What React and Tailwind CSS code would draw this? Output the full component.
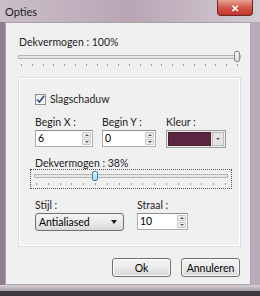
const font = "font-['Lato','Noto_Sans',sans-serif]";
const label = "text-[10.5px] leading-[15px] text-[#1e1e1e]";

const Ticks = ({ count, className }) => (
  <div className={`flex justify-between ${className}`}>
    {Array.from({ length: count }).map((_, i) => (
      <span key={i} className="block w-px h-[2px] bg-[#9a9a9a]" />
    ))}
  </div>
);

const Spinner = ({ value, width }) => (
  <div className={`${width} h-[17px] flex bg-white border border-[#abadb3] border-t-[#8e8f8f]`}>
    <div className="flex-1 pl-[2px] text-[10.5px] leading-[15px] text-black">{value}</div>
    <div className="w-[10px] flex flex-col gap-px py-px pr-px">
      <div className="flex-1 flex items-center justify-center border border-[#c5c5c5] bg-[#efefef] rounded-[1px]">
        <span className="block w-0 h-0 border-l-[2px] border-r-[2px] border-b-[2px] border-l-transparent border-r-transparent border-b-[#555]" />
      </div>
      <div className="flex-1 flex items-center justify-center border border-[#c5c5c5] bg-[#efefef] rounded-[1px]">
        <span className="block w-0 h-0 border-l-[2px] border-r-[2px] border-t-[2px] border-l-transparent border-r-transparent border-t-[#555]" />
      </div>
    </div>
  </div>
);

const Button = ({ children, width }) => (
  <button className={`${width} h-[19px] rounded-[3px] border border-[#707070] bg-gradient-to-b from-[#f4f4f4] via-[#ebebeb] to-[#d6d6d6] text-[10.5px] leading-[16px] text-black shadow-[inset_0_0_0_1px_#fbfbfb]`}>
    {children}
  </button>
);

export default function App() {
  return (
    <div className={`relative w-[260px] h-[296px] overflow-hidden bg-gradient-to-r from-[#8f7d8d] via-[#cdc3cc] to-[#b8aab6] ${font}`}>
      {/* title bar */}
      <div className="h-[22px] flex items-center pl-[5px] bg-gradient-to-r from-[#c9bfc8] via-[#b9a5b5] to-[#d3ccd2]">
        <span className="text-[11px] text-[#1e1e1e] leading-none">Opties</span>
      </div>
      <div className="absolute top-0 right-[7px] w-[36px] h-[16px] rounded-b-[4px] border border-t-0 border-[#6b2a24] bg-gradient-to-b from-[#e6a394] via-[#d3564a] to-[#c0342a] flex items-center justify-center">
        <span className="text-white text-[10px] font-bold leading-none">✕</span>
      </div>

      {/* client area */}
      <div className="ml-[5px] w-[246px] h-[263px] bg-[#f0f0f0] border border-[#a7a3a7] flex flex-col pl-[12px] pr-[9px]">
        <div className={`mt-[12px] pl-px ${label}`}>Dekvermogen : 100%</div>
        <div className="relative mt-[1px] h-[12px] flex items-center">
          <div className="w-full h-[4px] border border-[#b5b5b5] bg-[#e6e6e6]" />
          <div className="absolute right-[1px] top-0 w-[6px] h-[11px] rounded-[2px] border border-[#8a8a8a] bg-gradient-to-b from-[#f7f7f7] to-[#d9d9d9]" />
        </div>
        <Ticks count={21} className="mt-[1px] px-[3px]" />

        {/* group box */}
        <div className="mt-[11px] h-[170px] border border-[#d5dfe5] shadow-[inset_0_0_0_1px_#ffffff] flex flex-col pl-[16px] pr-[10px]">
          <div className="mt-[14px] flex items-center gap-[4px]">
            <div className="w-[11px] h-[11px] border border-[#8f8f8f] bg-gradient-to-b from-[#e8e8e8] to-[#f8f8f8] flex items-center justify-center">
              <svg width="9" height="9" viewBox="0 0 9 9">
                <path d="M1 4.5 L3.5 7 L8 1" fill="none" stroke="#2a4a8a" strokeWidth="1.6" />
              </svg>
            </div>
            <span className={label}>Slagschaduw</span>
          </div>

          <div className="mt-[8px] flex">
            <div className="w-[67px]">
              <div className={label}>Begin X :</div>
              <Spinner value="6" width="w-[58px]" />
            </div>
            <div className="w-[64px]">
              <div className={label}>Begin Y :</div>
              <Spinner value="0" width="w-[54px]" />
            </div>
            <div>
              <div className={label}>Kleur :</div>
              <div className="w-[60px] h-[18px] flex items-center border border-[#9c9c9c] bg-[#ececec] p-px gap-px">
                <div className="w-[43px] h-full bg-[#5b2540] border border-[#4a2036]" />
                <div className="flex-1 h-full border border-[#bcbcbc] bg-[#e4e4e4] flex items-center justify-center">
                  <span className="block w-0 h-0 border-l-[2px] border-r-[2px] border-t-[2px] border-l-transparent border-r-transparent border-t-[#555]" />
                </div>
              </div>
            </div>
          </div>

          <div className="mt-[9px] text-[10.5px] leading-[12px] text-[#1e1e1e]">Dekvermogen : 38%</div>
          <div className="-ml-[5px] w-[202px] h-[20px] border border-dotted border-[#555] flex flex-col px-[3px]">
            <div className="relative h-[11px] flex items-center">
              <div className="w-full h-[4px] border border-[#b5b5b5] bg-[#e6e6e6]" />
              <div className="absolute left-[58px] top-px w-[6px] h-[10px] rounded-[2px] border border-[#3c7fb1] bg-gradient-to-b from-[#e5f4fc] to-[#a7d9f5]" />
            </div>
            <Ticks count={17} className="mt-[2px] px-[2px]" />
          </div>

          <div className="mt-[9px] flex">
            <div className="w-[102px]">
              <div className={label}>Stijl :</div>
              <div className="w-[89px] h-[18px] rounded-[3px] border border-[#707070] bg-gradient-to-b from-[#f4f4f4] via-[#ebebeb] to-[#d8d8d8] flex items-center pl-[3px] pr-[6px]">
                <span className="flex-1 text-[10.5px] leading-none text-black">Antialiased</span>
                <span className="block w-0 h-0 border-l-[3px] border-r-[3px] border-t-[4px] border-l-transparent border-r-transparent border-t-[#1a1a1a]" />
              </div>
            </div>
            <div>
              <div className={label}>Straal :</div>
              <Spinner value="10" width="w-[51px]" />
            </div>
          </div>
        </div>

        <div className="mt-[11px] flex justify-end gap-[10px] pr-px">
          <Button width="w-[59px]">Ok</Button>
          <Button width="w-[59px]">Annuleren</Button>
        </div>
      </div>

      {/* bottom frame */}
      <div className="h-[6px] bg-gradient-to-b from-[#d7d2d6] to-[#a99ea7]" />
      <div className="h-[5px] bg-[#3c3a3d]" />
    </div>
  );
}
